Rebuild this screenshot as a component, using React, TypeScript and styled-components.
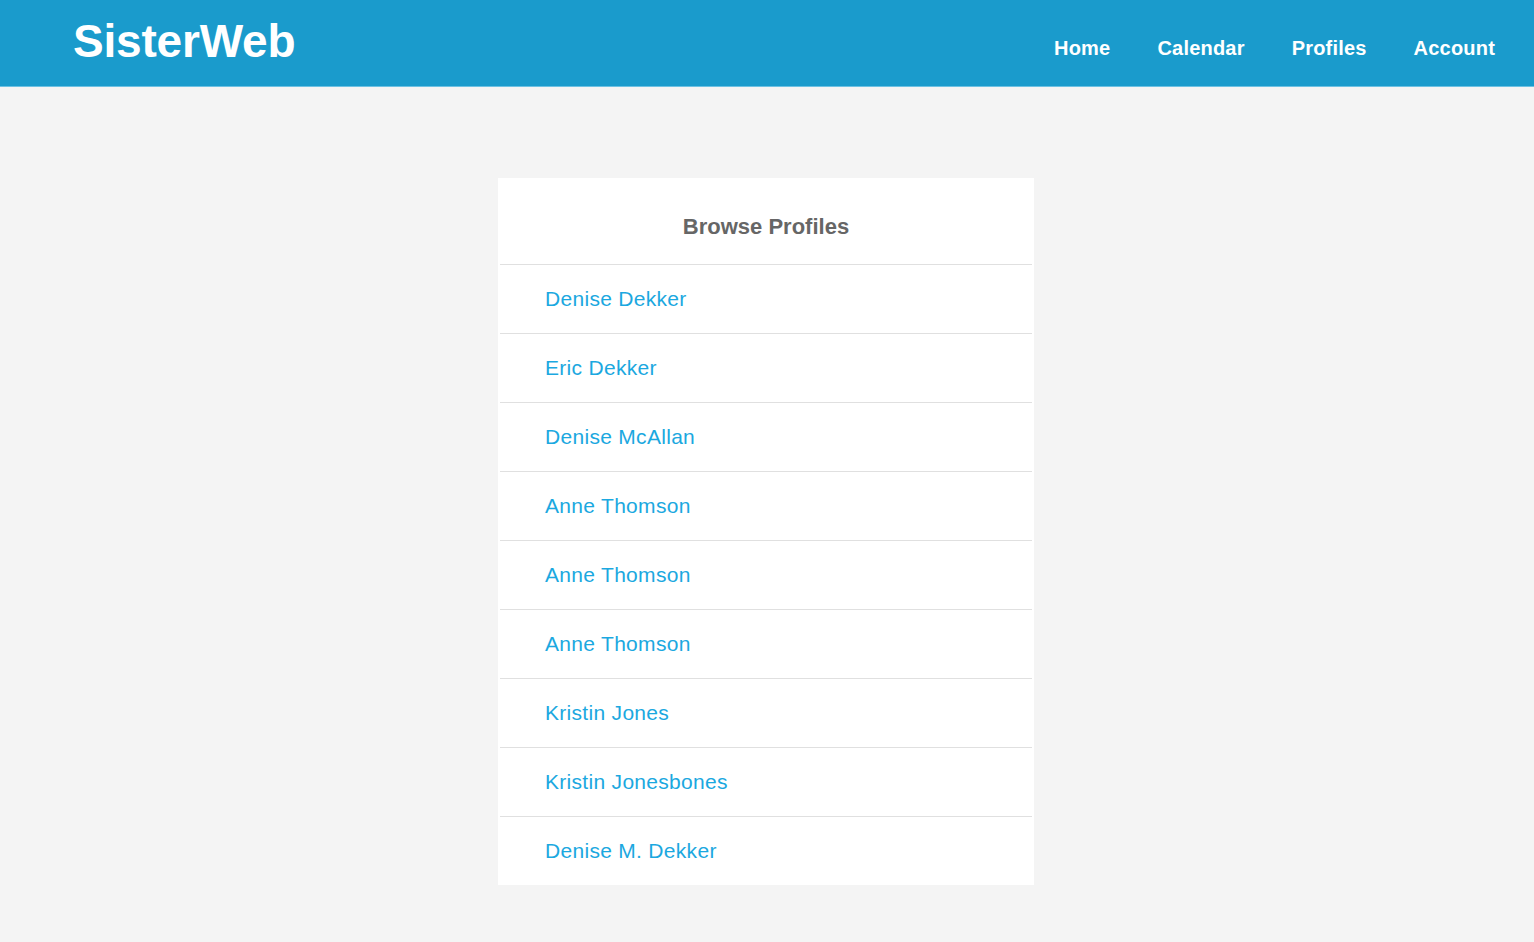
import React from "react";
import styled, { createGlobalStyle } from "styled-components";

const GlobalStyle = createGlobalStyle`
  html, body {
    margin: 0;
    padding: 0;
    background: #f4f4f4;
    font-family: "Liberation Sans", Arial, Helvetica, sans-serif;
  }
  * { box-sizing: border-box; }
`;

const TopBar = styled.header`
  height: 87px;
  background: #1a9bcc;
  border-bottom: 1px solid #6cc1e3;
  display: flex;
  align-items: flex-start;
  justify-content: space-between;
  padding: 0 39px 0 73px;
`;

const Logo = styled.a`
  font-size: 46px;
  font-weight: 700;
  color: #ffffff;
  text-decoration: none;
  line-height: 1;
  margin-top: 18px;
  letter-spacing: -0.2px;
`;

const Nav = styled.nav`
  display: flex;
  gap: 47px;
  margin-top: 37px;
`;

const NavLink = styled.a`
  font-size: 20px;
  font-weight: 700;
  color: #ffffff;
  text-decoration: none;
  line-height: 23px;
  letter-spacing: 0.2px;
`;

const Main = styled.main`
  display: flex;
  justify-content: center;
  padding-top: 91px;
  padding-right: 2px;
  padding-bottom: 58px;
`;

const Card = styled.section`
  width: 536px;
  background: #ffffff;
  padding: 0 2px;
  display: flex;
  flex-direction: column;
`;

const CardTitle = styled.h2`
  margin: 0;
  height: 87px;
  display: flex;
  align-items: center;
  justify-content: center;
  padding-top: 11px;
  font-size: 22px;
  font-weight: 700;
  color: #666666;
  border-bottom: 1px solid #e0e0e0;
`;

const List = styled.ul`
  list-style: none;
  margin: 0;
  padding: 0;
`;

const Row = styled.li<{ $last?: boolean }>`
  height: ${(p) => (p.$last ? "68px" : "69px")};
  display: flex;
  align-items: center;
  padding-left: 45px;
  border-bottom: ${(p) => (p.$last ? "none" : "1px solid #e0e0e0")};
`;

const NameLink = styled.a`
  font-size: 21px;
  color: #1ba8e0;
  text-decoration: none;
  letter-spacing: 0.3px;
`;

const names = [
  "Denise Dekker",
  "Eric Dekker",
  "Denise McAllan",
  "Anne Thomson",
  "Anne Thomson",
  "Anne Thomson",
  "Kristin Jones",
  "Kristin Jonesbones",
  "Denise M. Dekker",
];

export default function App() {
  return (
    <>
      <GlobalStyle />
      <TopBar>
        <Logo href="#">SisterWeb</Logo>
        <Nav>
          <NavLink href="#">Home</NavLink>
          <NavLink href="#">Calendar</NavLink>
          <NavLink href="#">Profiles</NavLink>
          <NavLink href="#">Account</NavLink>
        </Nav>
      </TopBar>
      <Main>
        <Card>
          <CardTitle>Browse Profiles</CardTitle>
          <List>
            {names.map((n, i) => (
              <Row key={i} $last={i === names.length - 1}>
                <NameLink href="#">{n}</NameLink>
              </Row>
            ))}
          </List>
        </Card>
      </Main>
    </>
  );
}
